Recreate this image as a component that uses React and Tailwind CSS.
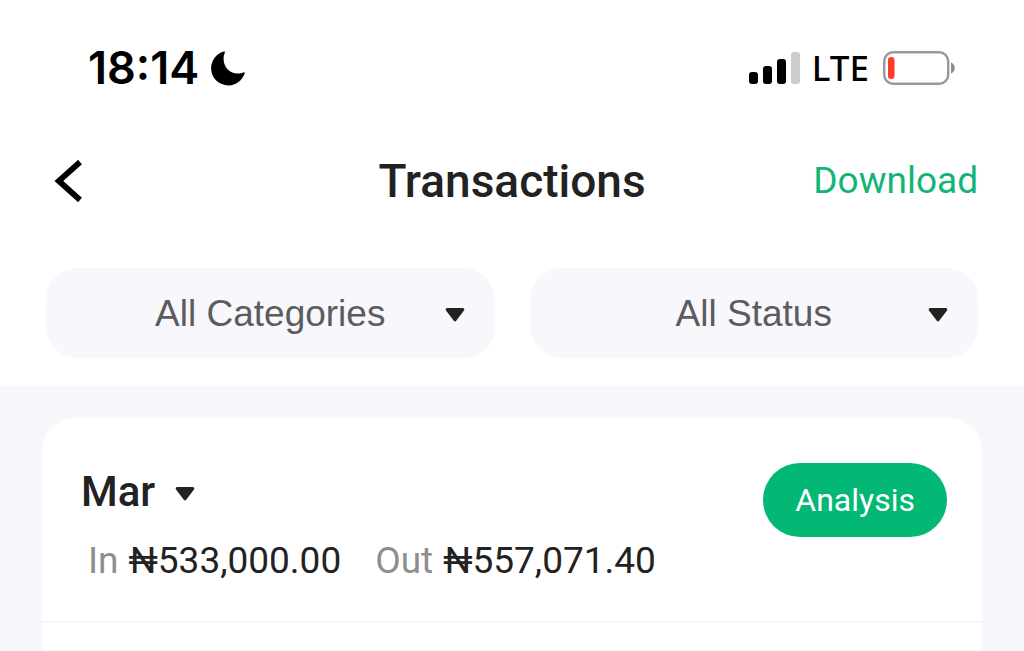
import React, { useState } from 'react';

const categories = ['All Categories'];
const statuses = ['All Status'];
const months = [{ name: 'Mar', moneyIn: '₦533,000.00', moneyOut: '₦557,071.40' }];

const Caret = ({ className }) => (
    <svg viewBox="0 0 20 14" aria-hidden="true" className={`pointer-events-none absolute h-[14px] w-5 text-[#222222] ${className}`}>
        <path d="M2.200 1.500h15.600L10 11.800z" fill="currentColor" stroke="currentColor" strokeWidth="3" strokeLinejoin="round" />
    </svg>
);

const StatusBar = () => (
    <div className="flex h-12 items-center justify-between pl-[88px] pr-[69px] text-black">
        <div className="flex items-center gap-3">
            <span className="font-['Inter',sans-serif] text-[45px] font-semibold leading-[48px]">18:14</span>
            <svg viewBox="0 0 34 35" aria-label="Do not disturb" className="h-[35px] w-[34px]">
                <path
                    d="M12.7.6C13.6.2 14.2.8 13.8 1.7 12.9 3.9 12.5 6 12.6 8.4c.3 8 6.3 14.1 14.2 14.1 2 0 3.8-.3 5.5-1.1.9-.4 1.7.2 1.4 1.1C31 29.600 24.900 34.400 17.600 34.400 7.900 34.400.1 27 .1 17.300.1 9.600 5.200 3 12.700.6z"
                    fill="currentColor"
                />
            </svg>
        </div>
        <div className="flex items-center">
            <svg viewBox="0 0 51 32" aria-label="Signal strength" className="h-8 w-[51px]">
                <rect x="0" y="20" width="9" height="12" rx="3" />
                <rect x="14" y="14" width="9" height="18" rx="3" />
                <rect x="28" y="7" width="9" height="25" rx="3" />
                <rect x="42" y="0" width="9" height="32" rx="3" fill="#cccccc" />
            </svg>
            <span className="ml-3 font-['Noto_Sans',sans-serif] text-[35px] font-medium leading-[48px]">LTE</span>
            <svg viewBox="0 0 72 34" aria-label="Battery low" className="ml-[14px] h-[34px] w-[72px]">
                <rect x="1.200" y="1.200" width="64" height="31.600" rx="9" fill="none" stroke="#999999" strokeWidth="2.400" />
                <rect x="5" y="6" width="6.500" height="22" rx="3" fill="#ff3b30" />
                <path d="M68 11.500c5 1.800 5 9.200 0 11z" fill="#8c8c8c" />
            </svg>
        </div>
    </div>
);

const FilterSelect = ({ label, options }) => {
    const [value, setValue] = useState(options[0]);

    return (
        <div className="relative flex-1">
            <select
                aria-label={label}
                value={value}
                onChange={(e) => setValue(e.target.value)}
                className="h-[90px] w-full appearance-none rounded-[32px] bg-[#f7f7fc] px-14 pt-0.5 text-center font-['Liberation_Sans',sans-serif] text-[37px] text-[#5c5c5e] outline-none [text-align-last:center]"
            >
                {options.map((option) => (
                    <option key={option}>{option}</option>
                ))}
            </select>
            <Caret className="right-[30px] top-10" />
        </div>
    );
};

const Total = ({ label, amount }) => (
    <div className="flex gap-2.5">
        <dt className="text-[#8e8e8e]">{label}</dt>
        <dd className="text-[#222222]">{amount}</dd>
    </div>
);

const App = () => {
    const [month, setMonth] = useState(months[0].name);
    const current = months.find((m) => m.name === month);

    return (
        <div className="flex min-h-screen flex-col bg-[#f7f7fc] font-['Roboto',sans-serif]">
            <header className="bg-white pb-7 pt-11">
                <StatusBar />
                <div className="grid h-44 grid-cols-[1fr_auto_1fr] items-center px-[46px] pt-0.5">
                    <button type="button" aria-label="Back" className="justify-self-start pl-2">
                        <svg viewBox="0 0 30 42" className="h-[42px] w-[30px]">
                            <path d="M26 2 4.800 21 26 40" fill="none" stroke="#000000" strokeWidth="5.800" />
                        </svg>
                    </button>
                    <h1 className="text-[46px] font-medium leading-[48px] text-[#222222]">Transactions</h1>
                    <a href="#download" className="justify-self-end text-[37px] leading-[48px] text-[#12b477]">
                        Download
                    </a>
                </div>
                <div className="flex gap-[35px] px-[46px]">
                    <FilterSelect label="Category" options={categories} />
                    <FilterSelect label="Status" options={statuses} />
                </div>
            </header>

            <main className="flex flex-1 flex-col px-[42px] pt-8">
                <section className="flex-1 rounded-t-[32px] bg-white">
                    <div className="flex items-start justify-between border-b-2 border-[#f8f8fa] pb-9 pl-[39px] pr-[35px] pt-[45px]">
                        <div>
                            <div className="relative inline-block align-top">
                                <select
                                    aria-label="Month"
                                    value={month}
                                    onChange={(e) => setMonth(e.target.value)}
                                    className="block h-[58px] appearance-none bg-transparent pr-10 text-[42px] font-medium leading-[48px] text-[#222222] outline-none [field-sizing:content]"
                                >
                                    {months.map((m) => (
                                        <option key={m.name}>{m.name}</option>
                                    ))}
                                </select>
                                <Caret className="right-0 top-6" />
                            </div>
                            <dl className="mt-4 flex gap-[34px] pl-[7px] text-[37px] leading-[48px]">
                                <Total label="In" amount={current.moneyIn} />
                                <Total label="Out" amount={current.moneyOut} />
                            </dl>
                        </div>
                        <button type="button" className="h-[74px] rounded-full bg-[#03b875] px-8 text-[32px] text-white">
                            Analysis
                        </button>
                    </div>
                </section>
            </main>
        </div>
    );
};

export default App;
